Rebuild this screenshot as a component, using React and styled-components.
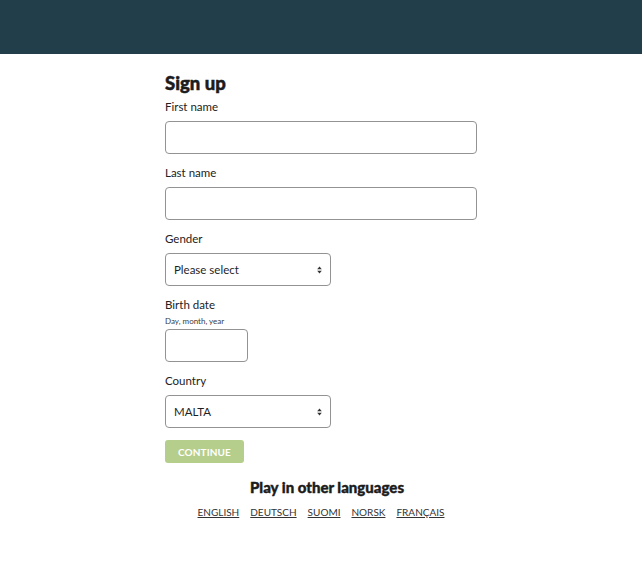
import React from "react";
import styled, { createGlobalStyle } from "styled-components";

const GlobalStyle = createGlobalStyle`
  body {
    margin: 0;
    background: #ffffff;
    font-family: Lato, "Open Sans", sans-serif;
    color: #222222;
  }
`;

const LANGUAGES = ["ENGLISH", "DEUTSCH", "SUOMI", "NORSK", "FRANÇAIS"];

const SelectArrow = () => (
  <svg width="5" height="8" viewBox="0 0 5 8">
    <path d="M2.5 0.5 L4.8 3.2 L0.2 3.2 Z" fill="#333" />
    <path d="M2.5 7.5 L4.8 4.8 L0.2 4.8 Z" fill="#333" />
  </svg>
);

const Select = ({ value, width }) => (
  <SelectBox $width={width}>
    <span>{value}</span>
    <ArrowSlot>
      <SelectArrow />
    </ArrowSlot>
  </SelectBox>
);

const App = () => {
  return (
    <>
      <GlobalStyle />
      <Header />
      <Main>
        <Title>Sign up</Title>
        <Field>
          <Label>First name</Label>
          <TextInput $width={312} />
        </Field>
        <Field>
          <Label>Last name</Label>
          <TextInput $width={312} />
        </Field>
        <Field>
          <Label>Gender</Label>
          <Select value="Please select" width={166} />
        </Field>
        <Field>
          <Label $tight>Birth date</Label>
          <Hint>Day, month, year</Hint>
          <TextInput $width={83} />
        </Field>
        <Field>
          <Label>Country</Label>
          <Select value="MALTA" width={166} />
        </Field>
        <ContinueButton>CONTINUE</ContinueButton>
        <LangTitle>Play in other languages</LangTitle>
        <LangRow>
          {LANGUAGES.map((lang) => (
            <LangLink key={lang} href="#">
              {lang}
            </LangLink>
          ))}
        </LangRow>
      </Main>
    </>
  );
};

export default App;

const Header = styled.header`
  height: 54px;
  background: #223e4a;
`;

const Main = styled.main`
  width: 312px;
  margin: 0 auto;
  padding-top: 18px;
  display: flex;
  flex-direction: column;
`;

const Title = styled.h1`
  margin: 0 0 5px;
  font-family: Lato, sans-serif;
  font-weight: 900;
  font-size: 18.5px;
  line-height: 22px;
  color: #1c1c1c;
  -webkit-text-stroke: 0.5px #1c1c1c;
`;

const Field = styled.div`
  display: flex;
  flex-direction: column;
  align-items: flex-start;
  margin-bottom: 11px;
`;

const Label = styled.label`
  font-size: 11.5px;
  line-height: 16px;
  color: #222;
  margin-bottom: ${(p) => (p.$tight ? "3px" : "6px")};
`;

const Hint = styled.div`
  font-size: 8px;
  line-height: 10px;
  color: #3a3a3a;
  margin-bottom: 3px;
`;

const TextInput = styled.input`
  box-sizing: border-box;
  width: ${(p) => p.$width}px;
  height: 33px;
  border: 1px solid #939393;
  border-radius: 4px;
  background: #fff;
  outline: none;
  padding: 0 8px;
`;

const SelectBox = styled.div`
  position: relative;
  box-sizing: border-box;
  width: ${(p) => p.$width}px;
  height: 33px;
  border: 1px solid #939393;
  border-radius: 4px;
  background: #fff;
  display: flex;
  align-items: center;
  padding: 0 8px;
  font-size: 11.5px;
  color: #1f1f1f;
`;

const ArrowSlot = styled.span`
  position: absolute;
  right: 8px;
  top: 12px;
  display: flex;
`;

const ContinueButton = styled.button`
  align-self: flex-start;
  width: 79px;
  height: 23px;
  margin-top: 1px;
  border: none;
  border-radius: 3px;
  background: #b5ce8b;
  color: #fff;
  font-family: Lato, sans-serif;
  font-weight: 700;
  font-size: 10px;
  letter-spacing: 0.1px;
  padding: 0;
`;

const LangTitle = styled.h2`
  margin: 14px 0 0;
  padding-left: 12px;
  text-align: center;
  font-family: Lato, sans-serif;
  font-weight: 900;
  font-size: 15px;
  line-height: 20px;
  color: #1c1c1c;
  -webkit-text-stroke: 0.4px #1c1c1c;
`;

const LangRow = styled.nav`
  margin-top: 8px;
  display: flex;
  justify-content: center;
  gap: 11px;
`;

const LangLink = styled.a`
  font-size: 10px;
  line-height: 14px;
  color: #333;
  text-decoration: underline;
`;
